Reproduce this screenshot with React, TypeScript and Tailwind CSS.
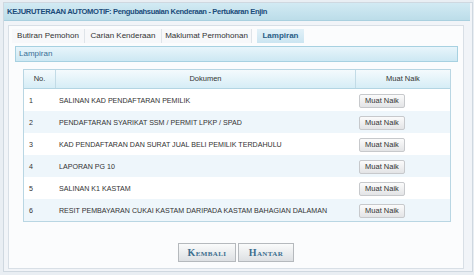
const docs = [
  'SALINAN KAD PENDAFTARAN PEMILIK',
  'PENDAFTARAN SYARIKAT SSM / PERMIT LPKP / SPAD',
  'KAD PENDAFTARAN DAN SURAT JUAL BELI PEMILIK TERDAHULU',
  'LAPORAN PG 10',
  'SALINAN K1 KASTAM',
  'RESIT PEMBAYARAN CUKAI KASTAM DARIPADA KASTAM BAHAGIAN DALAMAN',
];

const tabs = [
  { label: 'Butiran Pemohon', w: 'w-[73px]' },
  { label: 'Carian Kenderaan', w: 'w-[77px]' },
  { label: 'Maklumat Permohonan', w: 'w-[90px]' },
];

export default function App() {
  return (
    <div className="w-[474px] h-[275px] bg-[#e9eef3] pt-[2px] pl-[3px] font-['Liberation_Sans',Arial,sans-serif] overflow-hidden">
      <div className="w-[470px] h-[270px] bg-[#f1f4f8] border border-[#cfd8e0] flex flex-col">
        {/* header */}
        <div className="h-[18px] w-[466px] bg-gradient-to-b from-[#d2eaf3] to-[#bcdde9] border-b border-[#a9d0df] flex items-center pl-[3px]">
          <span className="text-[7.6px] font-bold text-[#1b4c7a] tracking-[-0.35px]">
            KEJURUTERAAN AUTOMOTIF: Pengubahsuaian Kenderaan - Pertukaran Enjin
          </span>
        </div>

        {/* inner panel */}
        <div className="mt-[4px] ml-[4px] w-[456px] h-[244px] bg-[#fbfcfd] border border-[#d8dfe6] flex flex-col">
          {/* tabs */}
          <div className="flex mt-[3px] ml-[3px] h-[14px] text-[8px] text-[#333]">
            {tabs.map((t) => (
              <div key={t.label} className={`${t.w} flex items-center justify-center border-r border-[#dfe4e9] bg-[#f7f8fa]`}>
                {t.label}
              </div>
            ))}
            <div className="ml-[5px] w-[47px] flex items-center justify-center bg-gradient-to-b from-[#e2f1f8] to-[#cbe5f1] text-[#2a5d86] font-bold">
              Lampiran
            </div>
          </div>

          {/* sub header */}
          <div className="mt-[3px] ml-[6px] w-[443px] h-[16px] bg-gradient-to-b from-[#e8f5fb] to-[#cde8f3] border border-[#a7d1e1] flex items-center pl-[3px] text-[8px] text-[#3a6f96]">
            Lampiran
          </div>

          {/* table */}
          <div className="mt-[7px] ml-[14px] w-[428px] border border-[#b9d6e3] bg-white text-[7.1px] text-[#333]">
            <div className="flex h-[19px] bg-gradient-to-b from-[#f4fafd] to-[#d6edf6] border-b border-[#b3d5e3] text-[7.5px]">
              <div className="w-[32px] flex items-center justify-center border-r border-[#c2dbe6]">No.</div>
              <div className="w-[300px] flex items-center justify-center border-r border-[#c2dbe6]">Dokumen</div>
              <div className="flex-1 flex items-center justify-center">Muat Naik</div>
            </div>
            {docs.map((d, i) => (
              <div
                key={d}
                className={`flex h-[22px] items-center ${i % 2 === 1 ? 'bg-[#eef6fb]' : 'bg-white'}`}
              >
                <div className="w-[32px] pl-[5px] pt-[3px]">{i + 1}</div>
                <div className="w-[300px] pl-[3px] pt-[3px]">{d}</div>
                <div className="flex-1 flex justify-start pl-[3px] pt-[2px]">
                  <button className="h-[14px] w-[46px] rounded-[2px] border border-[#c7c9cc] bg-gradient-to-b from-[#fbfbfb] to-[#e3e4e6] text-[7.5px] text-[#333] leading-none">
                    Muat Naik
                  </button>
                </div>
              </div>
            ))}
          </div>

          {/* actions */}
          <div className="mt-[21px] flex justify-center gap-[2px]">
            <button className="w-[58px] h-[19px] border border-[#b5b9bd] bg-gradient-to-b from-[#fafbfb] to-[#dde0e3] font-['Liberation_Serif',serif] font-bold text-[10px] text-[#3d6e8e] [font-variant:small-caps] tracking-[0.4px] leading-none">
              Kembali
            </button>
            <button className="w-[56px] h-[19px] border border-[#b5b9bd] bg-gradient-to-b from-[#fafbfb] to-[#dde0e3] font-['Liberation_Serif',serif] font-bold text-[10px] text-[#3d6e8e] [font-variant:small-caps] tracking-[0.4px] leading-none">
              Hantar
            </button>
          </div>
        </div>
      </div>
    </div>
  );
}
